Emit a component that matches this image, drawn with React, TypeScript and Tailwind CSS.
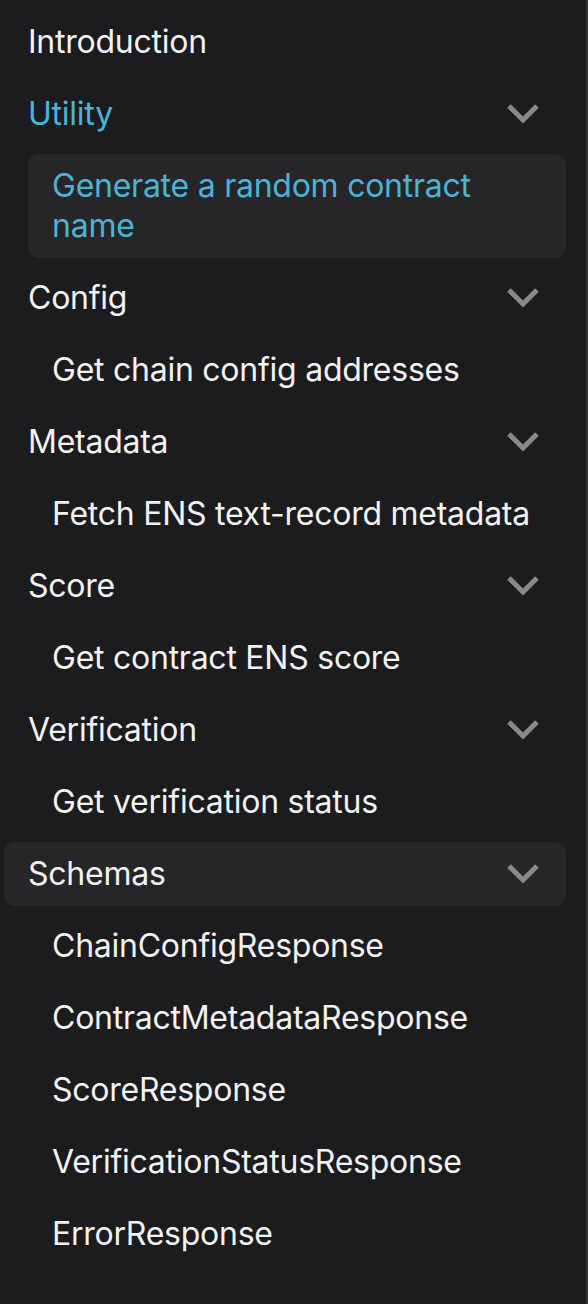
import React from "react";

const Chevron = () => (
  <svg width="34" height="22" viewBox="0 0 34 22" className="shrink-0">
    <polyline points="3,3 17,17 31,3" fill="none" stroke="#8a8a8c" strokeWidth="5" />
  </svg>
);

type Group = { title: string; items: string[]; active?: boolean; highlight?: boolean };

const groups: Group[] = [
  { title: "Utility", items: ["Generate a random contract name"], active: true },
  { title: "Config", items: ["Get chain config addresses"] },
  { title: "Metadata", items: ["Fetch ENS text-record metadata"] },
  { title: "Score", items: ["Get contract ENS score"] },
  { title: "Verification", items: ["Get verification status"] },
  {
    title: "Schemas",
    items: ["ChainConfigResponse", "ContractMetadataResponse", "ScoreResponse", "VerificationStatusResponse", "ErrorResponse"],
    highlight: true,
  },
];

export default function App() {
  return (
    <div
      className="w-[588px] h-[1304px] bg-[#1c1c1e] border-r-2 border-[#3a3a3d] overflow-hidden text-[32px] tracking-[-0.25px] text-[#f2f2f4]"
      style={{ fontFamily: "Inter, 'Noto Sans', sans-serif" }}
    >
      <div className="flex flex-col gap-2 pt-[10px] pl-[4px] pr-[20px]">
        <div className="h-16 flex items-center pl-[24px] leading-[40px]">Introduction</div>
        {groups.map((g) => (
          <React.Fragment key={g.title}>
            <div
              className={`h-16 flex items-center justify-between pl-[24px] pr-[26px] rounded-[10px] leading-[40px] ${
                g.highlight ? "bg-[#262628]" : ""
              } ${g.active ? "text-[#4bb3d6]" : ""}`}
            >
              <span>{g.title}</span>
              <Chevron />
            </div>
            {g.items.map((it, i) => (
              <div
                key={it}
                className={`ml-[24px] py-3 pl-[24px] pr-6 rounded-[10px] leading-[40px] ${
                  g.active && i === 0 ? "bg-[#262628] text-[#4bb3d6]" : ""
                }`}
              >
                {it}
              </div>
            ))}
          </React.Fragment>
        ))}
      </div>
    </div>
  );
}
